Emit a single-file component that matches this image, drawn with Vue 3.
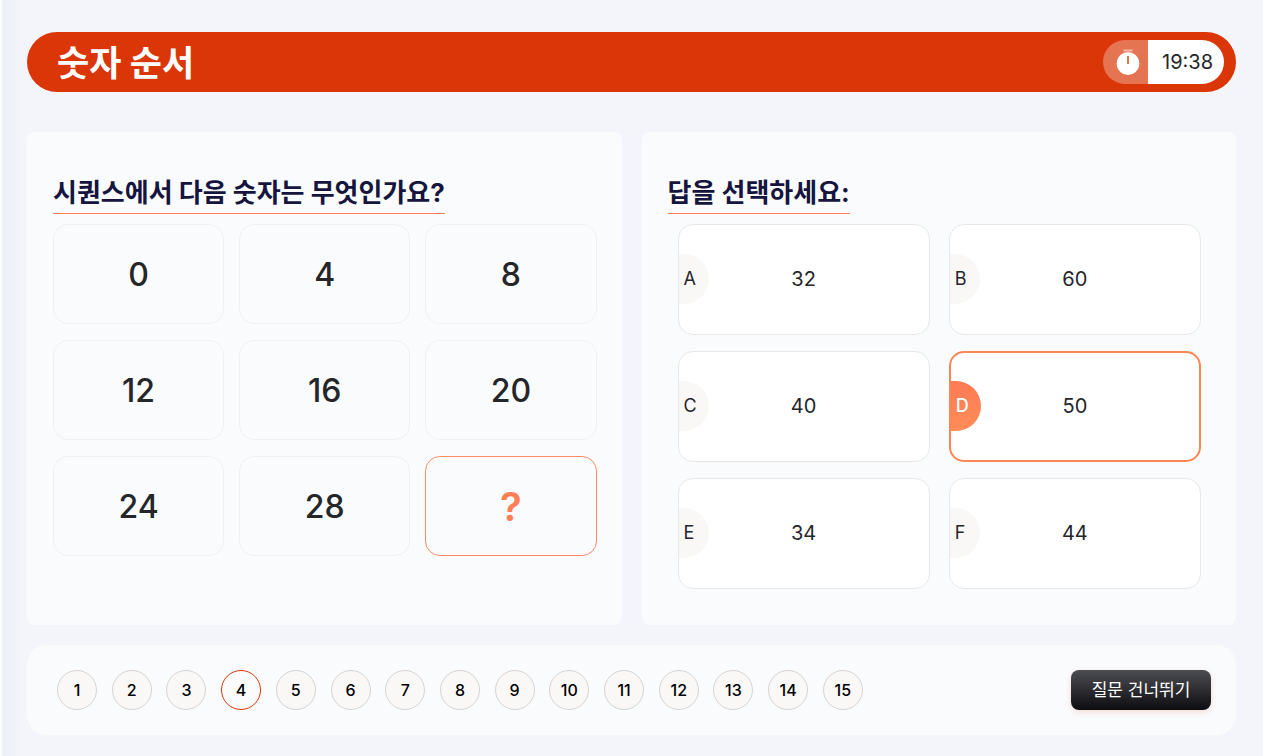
<template>
  <div class="quiz-page">
    <header class="quiz-header">
      <h1>숫자 순서</h1>
      <div class="timer">
        <span class="timer-icon">
          <svg width="24" height="28" viewBox="0 0 24 28" aria-hidden="true">
            <rect x="7.5" y="1.6" width="9" height="1.8" fill="#fff" fill-opacity="0.55" />
            <circle cx="12" cy="15.6" r="11.3" fill="#fff" />
            <path d="M12 8v8" stroke="#e57552" stroke-width="2" />
          </svg>
        </span>
        <span class="timer-value">19:38</span>
      </div>
    </header>

    <main class="panels">
      <section class="panel">
        <h2>시퀀스에서 다음 숫자는 무엇인가요?</h2>
        <div class="sequence">
          <div
            v-for="(item, index) in sequence"
            :key="index"
            class="cell"
            :class="{ unknown: item === '?' }"
          >
            {{ item }}
          </div>
        </div>
      </section>

      <section class="panel">
        <h2 id="answer-title">답을 선택하세요:</h2>
        <div class="answers" role="radiogroup" aria-labelledby="answer-title">
          <label
            v-for="answer in answers"
            :key="answer.letter"
            class="answer"
            :class="{ selected: selected === answer.letter }"
          >
            <input v-model="selected" type="radio" name="answer" :value="answer.letter" />
            <span class="letter">{{ answer.letter }}</span>
            <span class="value">{{ answer.value }}</span>
          </label>
        </div>
      </section>
    </main>

    <footer class="quiz-footer">
      <nav class="questions">
        <button
          v-for="n in 15"
          :key="n"
          type="button"
          class="question"
          :class="{ current: n === current }"
          @click="current = n"
        >
          {{ n }}
        </button>
      </nav>
      <button type="button" class="skip" @click="skip">질문 건너뛰기</button>
    </footer>
  </div>
</template>

<script setup>
import { ref } from 'vue'

const sequence = [0, 4, 8, 12, 16, 20, 24, 28, '?']

const answers = [
  { letter: 'A', value: 32 },
  { letter: 'B', value: 60 },
  { letter: 'C', value: 40 },
  { letter: 'D', value: 50 },
  { letter: 'E', value: 34 },
  { letter: 'F', value: 44 }
]

const selected = ref('D')
const current = ref(4)

const skip = () => {
  if (current.value < 15) current.value++
}
</script>

<style>
body {
  margin: 0;
  background: #f3f5fa;
}
</style>

<style scoped>
.quiz-page {
  box-sizing: border-box;
  min-height: 100vh;
  padding: 32px 27px 21px 25px;
  border-left: 2px solid #fff;
  background: linear-gradient(to right, #edf0f7, #f3f5fa 24px);
  color: #252629;
  font-family: Inter, "Noto Sans CJK KR", sans-serif;
}

.quiz-header {
  display: flex;
  align-items: center;
  justify-content: space-between;
  height: 60px;
  padding: 0 12px 0 30px;
  border-radius: 30px;
  background: #da3608;
}

h1 {
  margin: 0;
  padding-top: 2px;
  color: #fff;
  font-size: 35px;
  line-height: 60px;
  font-weight: 700;
}

.timer {
  display: flex;
  height: 44px;
  border-radius: 22px;
  overflow: hidden;
}

.timer-icon {
  display: flex;
  align-items: center;
  justify-content: center;
  width: 45px;
  padding-left: 4px;
  box-sizing: border-box;
  background: #e57552;
}

.timer-value {
  box-sizing: border-box;
  width: 76px;
  padding-left: 14px;
  background: #fff;
  font-size: 20px;
  line-height: 44px;
}

.panels {
  display: grid;
  grid-template-columns: 1fr 1fr;
  gap: 20px;
  margin: 40px 0 20px;
}

.panel {
  padding: 40px 25px 36px 26px;
  border-radius: 8px;
  background: #fafbfd;
}

h2 {
  width: fit-content;
  margin: 0 0 10px;
  border-bottom: 1px solid #ff7f57;
  color: #15153d;
  font-size: 26px;
  line-height: 41px;
  font-weight: 700;
}

.sequence {
  display: grid;
  grid-template-columns: repeat(3, 1fr);
  gap: 16px 15px;
}

.cell {
  display: flex;
  align-items: center;
  justify-content: center;
  box-sizing: border-box;
  height: 100px;
  border: 1px solid #eff0f2;
  border-radius: 15px;
  font-size: 32px;
  font-weight: 500;
}

.cell.unknown {
  border-color: #ff8a66;
  color: #ff7f55;
  font-size: 40px;
  font-weight: 600;
}

.answers {
  display: grid;
  grid-template-columns: 1fr 1fr;
  gap: 16px 19px;
  padding: 0 10px;
}

.answer {
  display: grid;
  align-items: center;
  box-sizing: border-box;
  height: 111px;
  padding-bottom: 1px;
  border: 1px solid #e7e8ea;
  border-radius: 15px;
  background: #fff;
  overflow: hidden;
  cursor: pointer;
}

.answer input {
  grid-area: 1 / 1;
  width: 1px;
  height: 1px;
  margin: 0;
  opacity: 0;
}

.letter {
  grid-area: 1 / 1;
  box-sizing: border-box;
  width: 30px;
  padding-left: 5px;
  border-radius: 0 25px 25px 0;
  background: #f9f8f7;
  font-size: 18px;
  line-height: 50px;
}

.value {
  grid-area: 1 / 1;
  justify-self: center;
  font-size: 20px;
}

.answer.selected {
  border: 2px solid #ff8556;
}

.selected .letter {
  background: linear-gradient(#ff7a55, #ff8d58);
  color: #fff;
  font-weight: 500;
}

.quiz-footer {
  display: flex;
  align-items: center;
  justify-content: space-between;
  gap: 20px;
  padding: 25px 25px 25px 30px;
  border-radius: 20px;
  background: #fafbfd;
}

.questions {
  display: flex;
  flex: 0 1 806px;
  justify-content: space-between;
}

.question {
  width: 40px;
  height: 40px;
  padding: 0 0 1px;
  border: 1px solid #d5d4d3;
  border-radius: 50%;
  background: #f9f8f7;
  color: #000;
  font-family: inherit;
  font-size: 16px;
  font-weight: 500;
}

.question.current {
  border-color: #da3608;
  background: #fafbfd;
}

.skip {
  width: 140px;
  height: 40px;
  padding: 0 0 3px;
  border: 0;
  border-radius: 8px;
  background: linear-gradient(#4c4d52, #0d0c11);
  box-shadow: 0 2px 6px rgba(218, 54, 8, 0.16);
  color: #fff;
  font-family: inherit;
  font-size: 17px;
}
</style>
